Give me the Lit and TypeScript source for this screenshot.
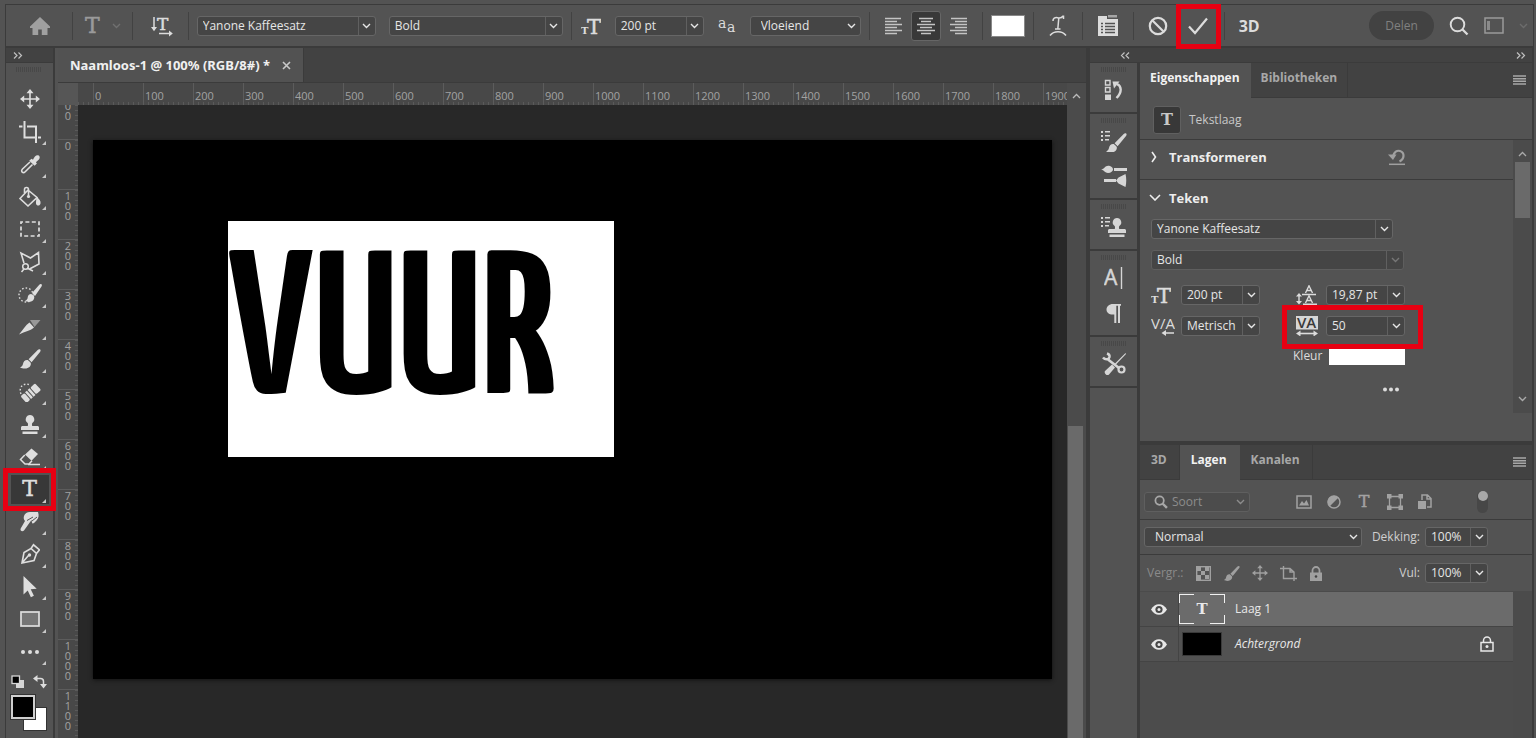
import { LitElement, html, svg, css, TemplateResult } from "lit";
import { customElement, property } from "lit/decorators.js";
import { classMap } from "lit/directives/class-map.js";

/* ---------- icons ---------- */

const box = (w: number, h: number, body: unknown) =>
  html`<svg width=${w} height=${h} viewBox="0 0 ${w} ${h}" fill="none" stroke="none" aria-hidden="true">${body}</svg>`;

const SERIF = "DejaVu Serif, serif";
const SANS = "Open Sans, sans-serif";

const stamp = svg`<path fill="currentColor" d="M11 1a4.3 4.3 0 0 1 2.6 7.7c-.7.6-.8 1.4-.4 3.3h5.3c.8 0 1.5.7 1.5 1.5V16H2v-2.5c0-.8.7-1.5 1.5-1.5h5.3c.4-1.9.3-2.7-.4-3.3A4.3 4.3 0 0 1 11 1zM3.500 17.500h15V20h-15z"/>`;
const brush = svg`<path fill="currentColor" d="M21.200.6c-.8-.6-1.700-.3-2.500.4L9.600 10.200l3 3L21 3c.7-.9.8-1.800.2-2.400zM8.800 11c-2.600-.4-4.300 1.200-4.700 3.600-.3 2-1.300 3.200-3 3.900 3 1.700 8.900 1.600 10.400-2 .6-1.400.5-2.700-.2-3.300z"/>`;
const list = svg`<g fill="currentColor"><path d="M0 1h2v2H0zM0 5h2v2H0zM0 9h2v2H0zM4 1h5v1.500H4zM4 5h5v1.500H4zM4 9h4v1.500H4z"/></g>`;
const moveShape = svg`<path stroke="currentColor" stroke-width="1.600" d="M10 3v14M3 10h14"/><path fill="currentColor" d="m10 0 3.500 4.200h-7zM10 20l-3.500-4.200h7zM0 10l4.200-3.500v7zM20 10l-4.200 3.500v-7z"/>`;

const icons: Record<string, TemplateResult> = {
  chevron: box(9, 6, svg`<path stroke="currentColor" stroke-width="1.400" d="M1 1l3.500 3.500L8 1"/>`),
  chevronBig: box(12, 7, svg`<path stroke="currentColor" stroke-width="1.600" d="M1 1l5 5 5-5"/>`),
  chevronRight: box(6, 12, svg`<path stroke="currentColor" stroke-width="1.600" d="M1 1l3.500 5L1 11"/>`),
  chevronUp: box(9, 6, svg`<path stroke="currentColor" stroke-width="1.300" d="M1 5l3.500-3.500L8 5"/>`),
  expand: box(10, 7, svg`<path stroke="currentColor" stroke-width="1.200" d="M1 .5l3 3-3 3M5.500 .5l3 3-3 3"/>`),
  collapse: box(10, 7, svg`<path stroke="currentColor" stroke-width="1.200" d="M4.500 .5l-3 3 3 3M9 .5l-3 3 3 3"/>`),
  home: box(22, 20, svg`<path fill="currentColor" d="M11 1 1 10.500V12h2.500v7h5.700v-5.500h3.600V19h5.700v-7H21v-1.500z"/>`),
  orient: box(24, 22, svg`<path stroke="currentColor" stroke-width="1.500" d="M3 2v12M8 18.500h11"/><path fill="currentColor" d="M0 12h6l-3 4.200zM18 15.500v6l3.800-3z"/><text x="6" y="14.500" font-family=${SERIF} font-size="17" fill="currentColor" stroke="currentColor" stroke-width=".5">T</text>`),
  size: box(20, 18, svg`<text x="0" y="17" font-family=${SERIF} font-size="10" font-weight="700" fill="currentColor">T</text><text x="6" y="17" font-family=${SERIF} font-size="21" fill="currentColor" stroke="currentColor" stroke-width=".5">T</text>`),
  alias: box(18, 18, svg`<text x="0" y="11" font-family=${SERIF} font-size="14" fill="currentColor">a</text><text x="9" y="15" font-family=${SERIF} font-size="14" fill="currentColor">a</text>`),
  left: box(18, 18, svg`<path stroke="currentColor" stroke-width="1.400" d="M0 1.500h16M0 4.500h12M0 7.500h17M0 10.500h12M0 13.500h17M0 16.500h12"/>`),
  center: box(18, 18, svg`<path stroke="currentColor" stroke-width="1.400" d="M2 1.500h14M4 4.500h10M0 7.500h18M3 10.500h12M0 13.500h18M4 16.500h10"/>`),
  right: box(18, 18, svg`<path stroke="currentColor" stroke-width="1.400" d="M2 1.500h16M6 4.500h12M1 7.500h17M6 10.500h12M1 13.500h17M6 16.500h12"/>`),
  warp: box(20, 22, svg`<g stroke="currentColor" stroke-width="1.500"><path d="M5 6C4.800 3.500 7 2.200 9.500 2.700s4 .6 5.500-1.700M10.800 3 9.800 14M7 14h5.500M15.500.5v3.500M2 20.500c4-5 12-5 16 0"/></g>`),
  panel: box(22, 22, svg`<path fill="currentColor" d="M1 1h9v3h11v17H1z"/><path fill="currentColor" opacity=".6" d="M11 0h9v2.500h-9z"/><path stroke="#535353" stroke-width="1.300" d="M4 8.500h2M8 8.500h10M4 11.500h2M8 11.500h10M4 14.500h2M8 14.500h10M4 17.500h2M8 17.500h10"/>`),
  cancel: box(20, 20, svg`<circle cx="10" cy="10" r="8.200" stroke="currentColor" stroke-width="2.200"/><path stroke="currentColor" stroke-width="2.200" d="M4.500 4.500l11 11"/>`),
  check: box(20, 18, svg`<path stroke="currentColor" stroke-width="2.200" d="M1 9.500l6 6.500L19 1.500"/>`),
  search: box(20, 20, svg`<circle cx="8.500" cy="8.500" r="6.800" stroke="currentColor" stroke-width="1.900"/><path stroke="currentColor" stroke-width="2.300" d="M13.500 13.500l5 5"/>`),
  workspace: box(20, 17, svg`<rect x="1" y="1" width="18" height="15" stroke="currentColor" stroke-width="1.500"/><path fill="currentColor" opacity=".8" d="M3 4h3v9H3z"/>`),
  menu: box(13, 10, svg`<path stroke="currentColor" stroke-width="1.600" d="M0 1h13M0 3.700h13M0 6.300h13M0 9h13"/>`),
  close: box(9, 9, svg`<path stroke="currentColor" stroke-width="1.600" d="M1 1l7 7M8 1L1 8"/>`),
  move: box(20, 20, moveShape),
  moveSmall: html`<svg width="16" height="16" viewBox="0 0 20 20" fill="none" aria-hidden="true">${moveShape}</svg>`,
  crop: box(22, 22, svg`<path stroke="currentColor" stroke-width="2" d="M5.500 0v16.500H17M8 5.500h9V22M0 5.500h3.500M19 16.500h3"/>`),
  dropper: box(20, 20, svg`<path fill="currentColor" d="M11.500 4.700l1.500 1C14.200 3 16 .8 18 1.200c2.200.5 2 3 .9 4.200l-3 2.800 1 1.200-2.300 2.300L9.200 6.800z"/><path stroke="currentColor" stroke-width="1.600" d="M10 8 2.500 15c-1.200 1.300-1 2.500-.3 3.100.8.700 2 .6 3-.4L12.500 10.500"/>`),
  bucket: box(22, 22, svg`<path stroke="currentColor" stroke-width="1.600" d="M9 4 1 12.500 9 20l9-8.500zM9.500 11V3.500C9.500 1 5.500.5 5.500 3.500V7"/><circle cx="9.500" cy="10.500" r="1.600" fill="currentColor"/><path fill="currentColor" d="M17 10.500c3.500 2 5 5 4.500 7-.4 2.600-4 2.800-4.500 0-.3-2 .8-4 0-7z"/>`),
  marquee: box(20, 16, svg`<rect x="1" y="1" width="18" height="14" stroke="currentColor" stroke-width="1.700" stroke-dasharray="4 2.400" stroke-dashoffset="2"/>`),
  lasso: box(22, 22, svg`<path stroke="currentColor" stroke-width="1.600" d="M5 12 2 2l9.500 5L19.500 1.500 20 13l-9.500 5"/><circle cx="6.500" cy="15.500" r="2.800" stroke="currentColor" stroke-width="1.500"/><path stroke="currentColor" stroke-width="1.500" d="M5 18l-2.500 3M8 17l6 3"/>`),
  quick: box(24, 20, svg`<circle cx="8" cy="11" r="7" stroke="currentColor" stroke-width="1.400" stroke-dasharray="1.600 2"/><path fill="currentColor" d="M23.500.3c-.8-.5-1.500-.2-2.200.4L14 9l3 3 6.500-9.500c.5-.8.600-1.700 0-2.200zM13.300 10c-2.400 0-3.300 1.400-3.600 3.600-.2 1.800-1 2.700-2.700 3.400 3 1.500 7.500 1 8.800-1.800.6-1.200.6-2.300.2-3z"/>`),
  knife: box(22, 16, svg`<path fill="currentColor" opacity=".5" d="M11 1h10.500l-6 7z"/><path fill="currentColor" d="M10.500 3.500 15 8.500c-3 3-9 4-15 7C4 11 6.500 6 10.500 3.500z"/>`),
  brush: box(22, 20, brush),
  brushSmall: html`<svg width="17" height="17" viewBox="0 0 22 20" fill="none" aria-hidden="true">${brush}</svg>`,
  heal: box(22, 20, svg`<path stroke="currentColor" stroke-width="1.400" stroke-dasharray="1.600 2" d="M2 12C-1 5 5 0 11 3"/><g transform="rotate(-42 12 11)"><rect x="2" y="6.500" width="5" height="9" rx="1.500" fill="currentColor"/><rect x="8" y="6.500" width="2.500" height="9" fill="currentColor"/><rect x="11.500" y="6.500" width="2.500" height="9" fill="currentColor"/><rect x="15" y="6.500" width="6.500" height="9" rx="1.500" fill="currentColor"/></g>`),
  stamp: box(22, 21, stamp),
  eraser: box(22, 18, svg`<path fill="currentColor" d="M12.500.5 19 6l-6.500 6.800L6 6.500z"/><path stroke="currentColor" stroke-width="1.500" d="M5.800 7 1.500 11.500 6 16h4l3-3.200M9 16.500h12"/>`),
  smudge: box(22, 22, svg`<path fill="currentColor" d="M5 5c1-3 4-4.500 7-4h7c1 3 1 6-1.500 8.500L15 12c-1 .8-2 .5-2-.5L12.500 9 5 19.500c-1.500 1.600-4.300.5-3.300-2L6 10c-1.500-1.500-1.500-3.500-1-5z"/><path stroke="#535353" d="M8 9.500 14 6M13 10l5-4"/>`),
  pen: box(20, 22, svg`<path stroke="currentColor" stroke-width="1.600" d="M2 20 4 9.500l7-4 5.500 5-2.500 7zM2 20l6.500-7.500M11 5.500l2.500-3.700 6 5-3 3.700"/><circle cx="9.500" cy="12" r="1.700" fill="currentColor"/>`),
  arrow: box(16, 22, svg`<path fill="currentColor" d="M1.500 0v18.500l4.200-4 3.200 6.700 3-1.500-3.200-6.500 6-.5z"/>`),
  rect: box(20, 16, svg`<rect x="1" y="1" width="18" height="14" fill="#757575" stroke="currentColor" stroke-width="1.700"/>`),
  dots: box(20, 6, svg`<g fill="currentColor"><circle cx="3" cy="3" r="2"/><circle cx="10" cy="3" r="2"/><circle cx="17" cy="3" r="2"/></g>`),
  dotsSmall: box(18, 5, svg`<g fill="currentColor"><circle cx="3" cy="2.500" r="2"/><circle cx="9" cy="2.500" r="2"/><circle cx="15" cy="2.500" r="2"/></g>`),
  mini: box(14, 14, svg`<path fill="#d6d6d6" d="M5 5h8v8H5z"/><rect x="1" y="1" width="7.500" height="7.500" fill="#000" stroke="#d6d6d6" stroke-width="1.300"/>`),
  swap: box(14, 14, svg`<path stroke="currentColor" stroke-width="1.500" d="M3 3.500h4.500c2 0 3 1 3 3V10"/><path fill="currentColor" d="M4.500 0v7L0 3.500zM7 9h7l-3.500 4.500z"/>`),
  history: box(20, 22, svg`<g stroke="currentColor" stroke-width="1.400"><path d="M1.500 1.500h4.500v4.500H1.500zM1.500 8.500h4.500v4.500H1.500z"/></g><path fill="currentColor" d="M1 15.500h6V21H1z"/><path stroke="currentColor" stroke-width="2.400" d="M13 5c4.500 2 5.500 8-.5 14"/><path fill="currentColor" d="M8.500 2.500h7L10 9.500z"/>`),
  brushes: box(26, 22, svg`${list}<g transform="translate(4 3)">${brush}</g>`),
  brushSet: box(26, 22, svg`<path fill="currentColor" d="M0 4.500C4 4 4-.5 9 1c2 .8 3 2 3 3.500S10 8 7 8 3 5 0 4.500zM13 3h13v3H13zM3 14h12v3H3zM15 15.500l2.500-3 7-3.500c1 4 1 9 0 13l-7-3.500z"/>`),
  stampSet: box(26, 22, svg`${list}<g transform="translate(5 1)">${stamp}</g>`),
  char: box(20, 22, svg`<text x="0" y="18" font-family=${SANS} font-size="21" fill="currentColor" stroke="currentColor" stroke-width=".5">A</text><path stroke="currentColor" stroke-width="1.400" d="M17.500 0v22"/>`),
  para: box(16, 20, svg`<path fill="currentColor" d="M7 1h8v1.700h-1V20h-2V2.700h-1.700V20h-2v-8.500C3 12 .5 9.500.5 6.500S3 1 7 1z"/>`),
  tools: box(26, 24, svg`<path stroke="currentColor" stroke-width="2.600" d="M7 7.500l11 8.500"/><circle cx="20.500" cy="17.500" r="3" stroke="currentColor" stroke-width="2.200"/><path stroke="currentColor" stroke-width="2.500" d="M2 5.500c2.500 3 6 2 6.500-.5.300-2-1-3-2.500-3.500"/><path fill="currentColor" d="M24.500 1 13.500 12l1 1L25 2zM11 12.500l3 3-6 7c-1.700 1.800-5.500-1-4-3.500z"/>`),
  reset: box(18, 18, svg`<path stroke="currentColor" stroke-width="2.200" d="M5 8.500C6 4 9 2 12 3c5 1.600 4.500 8-.5 10.500"/><path fill="currentColor" d="M0 6.500h8.500L5 12z"/><path stroke="currentColor" stroke-width="1.500" d="M1 16.300h16"/>`),
  leading: box(22, 20, svg`<path stroke="currentColor" stroke-width="1.400" d="M3 10v8M6 9.500h14M7 19.300h14"/><path fill="currentColor" d="M0 11.500h6L3 8zM0 16h6l-3 3.500z"/><path stroke="currentColor" stroke-width="1.400" d="M9.500 8 13 .8 16.500 8M11 5.500h4M9.500 18l3.500-7.200 3.500 7.200M11 15.500h4"/>`),
  kerning: box(24, 20, svg`<text x="0" y="13" font-family=${SANS} font-size="15" fill="currentColor">V/A</text><path stroke="currentColor" stroke-width="1.500" d="M13 17h10"/><path fill="currentColor" d="M15 14v6l-4.500-3z"/>`),
  tracking: box(22, 20, svg`<path fill="#d6d6d6" d="M0 0h22v13.500H0z"/><text x="1" y="12" font-family=${SANS} font-size="15" font-weight="600" fill="#3a3a3a">VA</text><path stroke="currentColor" stroke-width="1.600" d="M3 17.500h16"/><path fill="currentColor" d="M4.500 14.500v6L0 17.500zM17.500 14.500v6l4.500-3z"/>`),
  image: box(16, 14, svg`<rect x="1" y="1" width="14" height="12" stroke="currentColor" stroke-width="1.500"/><path fill="currentColor" d="M3 10.500 6 6l2 2.500L10.500 5l2.500 5.500z"/>`),
  adjust: box(14, 14, svg`<circle cx="7" cy="7" r="6" stroke="currentColor" stroke-width="1.500"/><path fill="currentColor" d="M11.500 2.500A6.300 6.300 0 0 0 2.500 11.500z"/>`),
  shape: box(16, 16, svg`<path stroke="currentColor" stroke-width="1.300" d="M2.500 2.500h11v11h-11z"/><g fill="currentColor"><path d="M0 0h4.500v4.500H0zM11.500 0H16v4.500h-4.500zM0 11.500h4.500V16H0zM11.500 11.500H16V16h-4.500z"/></g>`),
  smart: box(14, 16, svg`<path stroke="currentColor" stroke-width="1.500" d="M4 6V1h5.500L13 4.500V13H9M9 1v4h4"/><path fill="currentColor" d="M0 7h8v8H0z"/>`),
  checker: box(15, 15, svg`<rect x=".7" y=".7" width="13.600" height="13.600" stroke="currentColor" stroke-width="1.400"/><path fill="currentColor" d="M1 1h4v4H1zM9 1h4v4H9zM5 5h4v4H5zM1 9h4v5H1zM9 9h4v4H9z"/>`),
  frame: box(17, 15, svg`<path stroke="currentColor" stroke-width="1.400" d="M3.500 0v12.500H17M0 2.500h10l4 3.500v9M10 2.500V6h4"/>`),
  lock: box(14, 15, svg`<path fill="currentColor" d="M1 6.500h12V15H1z"/><path stroke="currentColor" stroke-width="1.800" d="M3.500 7V4.500a3.500 3.500 0 0 1 7 0V7"/><circle cx="7" cy="10.500" r="1.300" fill="#444"/>`),
  lockOpen: box(14, 16, svg`<rect x="1" y="6.500" width="12" height="8.500" stroke="currentColor" stroke-width="1.500"/><path stroke="currentColor" stroke-width="1.500" d="M3.500 6.500V4.500a3.500 3.500 0 0 1 7 0v2"/><circle cx="7" cy="10.500" r="1.500" fill="currentColor"/>`),
  eye: box(16, 11, svg`<path fill="currentColor" d="M0 5.500C4-1.500 12-1.500 16 5.500 12 12.500 4 12.500 0 5.500z"/><circle cx="8" cy="5.500" r="3.600" fill="#484848"/><circle cx="8" cy="5.500" r="1.500" fill="currentColor"/>`),
};

/* ---------- drop-down ---------- */

@customElement("ps-combo")
export class PsCombo extends LitElement {
  @property() label = "";
  @property() value = "";
  @property({ type: Boolean }) plain = false;
  @property({ type: Boolean }) dim = false;

  static styles = css`
    :host { display: block; }
    .combo {
      display: grid;
      grid-template-columns: minmax(0, 1fr) 17px;
      height: 20px;
      box-sizing: border-box;
      border: 1px solid #666;
      border-radius: 3px;
      background: #454545;
      color: #e6e6e6;
    }
    .dim { border-color: #5e5e5e; }
    select {
      grid-area: 1 / 1 / 2 / 3;
      appearance: none;
      min-width: 0;
      margin: 0;
      padding: 0 18px 0 5px;
      border: 0;
      outline: 0;
      background: none;
      color: inherit;
      font: 12px/18px "Open Sans", sans-serif;
    }
    .plain select { padding-left: 10px; }
    .arrow {
      grid-area: 1 / 2 / 2 / 3;
      display: grid;
      place-items: center;
      border-left: 1px solid #606060;
      pointer-events: none;
    }
    .plain .arrow { border-left-color: transparent; }
    .dim .arrow { color: #777; }
  `;

  render() {
    return html`<div class=${classMap({ combo: true, plain: this.plain, dim: this.dim })}>
      <select aria-label=${this.label}><option>${this.value}</option></select>
      <span class="arrow">${icons.chevron}</span>
    </div>`;
  }
}

/* ---------- application ---------- */

const TOOLS: [string, string][] = [
  ["move", "Verplaatsen"], ["crop", "Uitsnijden"], ["dropper", "Pipet"], ["bucket", "Emmertje"],
  ["marquee", "Selectiekader"], ["lasso", "Veelhoeklasso"], ["quick", "Snelle selectie"], ["knife", "Segment"],
  ["brush", "Penseel"], ["heal", "Retoucheren"], ["stamp", "Kloonstempel"], ["eraser", "Gummetje"],
  ["type", "Tekst"], ["smudge", "Natte vinger"], ["pen", "Pen"], ["arrow", "Padselectie"],
  ["rect", "Rechthoek"], ["dots", "Meer"],
];

const DOCK: [string, string][][] = [
  [["history", "Historie"]],
  [["brushes", "Penselen"], ["brushSet", "Penseelinstellingen"]],
  [["stampSet", "Kloonbron"]],
  [["char", "Teken"], ["para", "Alinea"]],
  [["tools", "Voorinstellingen"]],
];

@customElement("app-root")
export class AppRoot extends LitElement {
  static styles = css`
    :host {
      display: block;
      font: 12px/18px "Open Sans", sans-serif;
      color: #dcdcdc;
      --line: #3b3b3b;
      --bar: #535353;
      --deep: #424242;
    }
    * { box-sizing: border-box; }
    svg { display: block; flex: none; }
    button {
      display: grid;
      place-items: center;
      margin: 0;
      padding: 0;
      border: 0;
      background: none;
      color: inherit;
      font: inherit;
    }
    .app {
      display: flex;
      flex-direction: column;
      height: 100vh;
      min-height: 738px;
      padding: 4px 2px 0 5px;
      background: var(--bar);
      overflow: hidden;
    }
    .serif { font: 22px/22px "DejaVu Serif", serif; -webkit-text-stroke: 0.5px currentColor; }

    /* options bar */
    .options {
      display: flex;
      align-items: center;
      flex: none;
      height: 44px;
      border: 1px solid var(--line);
      border-bottom-width: 2px;
    }
    .group {
      display: flex;
      align-items: center;
      height: 28px;
      flex: none;
      border-right: 1px solid #424242;
    }
    .last { border-right: 0; }
    .g8 { padding: 0 8px; gap: 13px; }
    .size { padding: 0 8px 0 9px; gap: 14px; }
    .g14 { padding: 0 14px; }
    .home { padding: 0 21px 0 23px; color: #a0a0a0; }
    .preset { padding: 0 11px 0 12px; gap: 12px; color: #9a9a9a; }
    .preset .chev { color: #707070; }
    .orient { padding: 0 13px 0 18px; }
    .w179 { width: 179px; }
    .w174 { width: 174px; }
    .w89 { width: 89px; }
    .w111 { width: 111px; }
    .align { padding: 0 9px; gap: 2px; }
    .align button { width: 30px; height: 30px; color: #c4c4c4; }
    .align .on { background: #383838; border-radius: 3px; border: 1px solid #666; }
    .swatch { width: 34px; height: 22px; background: #fff; border: 1px solid #888; }
    .commit { padding: 0 3px 0 14px; gap: 8px; }
    .accept { width: 45px; height: 28px; }
    .mark { position: relative; }
    .mark::after {
      content: "";
      position: absolute;
      inset: var(--mark, 0);
      border: 5px solid #e60012;
      pointer-events: none;
    }
    .accept.mark { --mark: -8px 0 -9px 0; }
    .three { padding: 0 14px; font: 700 16px/20px "Open Sans", sans-serif; }
    .end {
      display: flex;
      align-items: center;
      gap: 15px;
      margin-left: auto;
      padding-right: 5px;
    }
    .share {
      width: 65px;
      height: 29px;
      border-radius: 15px;
      background: #424242;
      color: #808080;
    }
    .end .dimmed { color: #9a9a9a; }
    .end .faint { color: #6c6c6c; }

    /* body columns */
    .body { display: flex; flex: 1; min-height: 0; }
    .toolbar {
      display: flex;
      flex-direction: column;
      width: 50px;
      flex: none;
      border: solid var(--line);
      border-width: 0 2px 0 1px;
    }
    .strip {
      display: flex;
      align-items: center;
      height: 15px;
      flex: none;
      padding: 0 7px;
      background: var(--deep);
      border-bottom: 1px solid var(--line);
      color: #c0c0c0;
    }
    .grip {
      width: 26px;
      height: 5px;
      flex: none;
      background: repeating-linear-gradient(90deg, #484848 0 1px, transparent 1px 2px);
    }
    .toolbar .grip { margin: 4px 0 0 10px; }
    .tools {
      display: flex;
      flex-direction: column;
      height: 585px;
      flex: none;
      margin-top: 11px;
      color: #dedede;
    }
    .tool { flex: 1; position: relative; width: 100%; }
    .more::before {
      content: "";
      position: absolute;
      right: 7px;
      bottom: 3px;
      border: solid transparent;
      border-width: 0 0 4px 4px;
      border-bottom-color: #c8c8c8;
    }
    .picked { background: linear-gradient(#383838, #383838) center / 38px 29px no-repeat; }
    .tool.mark { --mark: -5px -3px -5px -3px; z-index: 1; }
    .colors { display: flex; gap: 8px; padding: 7px 0 0 5px; }
    .chips { display: grid; width: 36px; height: 36px; margin: 6px 0 0 5px; }
    .chip { grid-area: 1 / 1; width: 24px; height: 24px; border: 2px solid #cfcfcf; background: #000; outline: 1px solid #333; outline-offset: -1px; }
    .chip.front { outline-offset: 0; }
    .chip.back { place-self: end; background: #fff; border-color: #fff; }

    .doc {
      display: flex;
      flex-direction: column;
      flex: 1;
      min-width: 0;
      margin-left: 3px;
      border-right: 1px solid var(--line);
    }
    .tabbar { display: flex; flex: none; height: 35px; background: var(--deep); border-bottom: 1px solid var(--line); }
    .doctab {
      display: flex;
      align-items: center;
      gap: 12px;
      padding: 0 12px;
      background: #525252;
      border-right: 1px solid var(--line);
      color: #f0f0f0;
      font: 700 13px/18px "Noto Sans", sans-serif;
      white-space: nowrap;
    }
    .doctab button { color: #c8c8c8; }
    .work { display: flex; flex: 1; min-height: 0; }
    .surface {
      display: grid;
      grid-template: 22px minmax(0, 1fr) / 20px minmax(0, 1fr);
      flex: 1;
      min-width: 0;
    }
    .corner { background: #565656; }
    .hruler, .vruler { display: flex; overflow: hidden; background-color: #484848; color: #a2a2a2; font-size: 11px; }
    .hruler {
      padding-left: 15px;
      background-image: repeating-linear-gradient(90deg, #5a5a5a 0 1px, transparent 1px 5px);
      background-position: 0 100%;
      background-size: 100% 3px;
      background-repeat: no-repeat;
      line-height: 25px;
    }
    .hruler span { width: 50px; flex: none; padding-left: 1px; border-left: 1px solid #5c5c5c; }
    .vruler {
      flex-direction: column;
      background-image: repeating-linear-gradient(#5a5a5a 0 1px, transparent 1px 5px);
      background-position: 100% 0;
      background-size: 3px 100%;
      background-repeat: no-repeat;
      line-height: 10px;
    }
    .vruler div { height: 50px; flex: none; padding-top: 1px; border-top: 1px solid #5c5c5c; }
    .vruler .cut { display: flex; flex-direction: column; justify-content: flex-end; height: 34px; padding: 0 0 18px; border: 0; }
    .vruler span { display: block; text-align: center; flex: none; }
    .pasteboard { background: #282828; padding: 35px 15px 0 15px; }
    .artboard { display: flow-root; aspect-ratio: 16 / 9; background: #000; box-shadow: 0 1px 4px #111; }
    .typed {
      display: flex;
      align-items: center;
      width: 386px;
      height: 236px;
      margin: 81px 0 0 135px;
      background: #fff;
      color: #000;
      font: 700 204px/236px "Yanone Kaffeesatz", "Open Sans Condensed", "Noto Sans ExtraCondensed", "Noto Sans Condensed", "Roboto Condensed", "Liberation Sans Narrow", "DejaVu Sans Condensed", sans-serif;
      white-space: nowrap;
    }
    .scroll {
      display: flex;
      flex-direction: column;
      justify-content: space-between;
      align-items: center;
      width: 19px;
      flex: none;
      padding: 10px 2px 0 1px;
      background: #4b4b4b;
      color: #bbb;
    }
    .thumb { width: 15px; height: 312px; background: #6a6a6a; margin-right: 1px; }

    /* right side */
    .side {
      display: flex;
      flex-direction: column;
      width: 447px;
      flex: none;
      border: solid var(--line);
      border-width: 0 2px 0 3px;
    }
    .side .strip { justify-content: space-between; padding: 0 6px 0 30px; }
    .cols { display: flex; flex: 1; min-height: 0; }
    .dock { width: 50px; flex: none; border-right: 3px solid var(--line); }
    .stack {
      display: flex;
      flex-direction: column;
      align-items: center;
      padding: 4px 0 5px;
      border-bottom: 2px solid var(--line);
      color: #d6d6d6;
    }
    .stack button { width: 36px; height: 35px; }
    .panels { display: flex; flex-direction: column; flex: 1; min-width: 0; }
    .tabs {
      display: flex;
      flex: none;
      height: 35px;
      background: var(--deep);
      font-weight: 700;
      color: #a8a8a8;
    }
    .tabs button { padding: 0 10px 4px; border: solid var(--line); border-width: 0 1px 1px 0; }
    .tabs.wide button { padding: 0 12px 4px 11px; }
    .tabs .open { background: var(--bar); color: #f2f2f2; border-color: transparent; }
    .tabs button.menu { margin-left: auto; padding: 0 6px 0 0; border-right: 0; }
    .tabs i { flex: 1; border-bottom: 1px solid var(--line); }
    .props { height: 347px; flex: none; border-bottom: 4px solid var(--line); }
    .kind {
      display: flex;
      align-items: center;
      gap: 8px;
      height: 42px;
      padding: 3px 0 0 13px;
      border-bottom: 1px solid var(--line);
      color: #c8c8c8;
    }
    .kind b { display: grid; place-items: center; width: 28px; height: 28px; border-radius: 3px; border: 1px solid #606060; background: #383838; font: 700 16px/16px "DejaVu Serif", serif; }
    .props .inner { display: flex; height: 273px; }
    .form { flex: 1; min-width: 0; }
    .rail {
      display: flex;
      flex-direction: column;
      align-items: center;
      width: 19px;
      flex: none;
      background: #4b4b4b;
      color: #aaa;
      padding: 11px 0 11px 0;
    }
    .rail i { width: 15px; height: 56px; background: #6a6a6a; margin: 5px 0 auto; }
    .head { display: flex; align-items: center; gap: 11px; height: 40px; padding: 0 0 5px 9px; font-size: 13px; font-weight: 700; color: #ededed; }
    .head.second { height: 39px; padding-bottom: 4px; }
    .head .ico { display: grid; place-items: center; width: 9px; }
    .head button { margin: 0 107px 0 auto; color: #a0a0a0; }
    .ruled { border-bottom: 1px solid var(--line); }
    .fields { display: flex; flex-direction: column; gap: 11px; padding: 0 0 0 11px; }
    .w242 { width: 242px; }
    .w253 { width: 253px; }
    .w253 + .pair { margin-top: 4px; }
    .pair { display: flex; }
    .field { display: flex; align-items: center; gap: 8px; height: 20px; }
    .field .ico { width: 22px; }
    .field ps-combo { width: 79px; }
    .field + .field { margin-left: 36px; }
    .field.mark { --mark: -11px -18px -13px -14px; }
    .color { display: flex; align-items: center; gap: 7px; margin-left: 142px; height: 18px; }
    .color button { width: 76px; height: 18px; background: #fff; }
    .dots { margin: 22px 0 0 242px; width: 18px; }

    /* layers */
    .row { display: flex; align-items: center; flex: none; border-bottom: 1px solid var(--line); padding-left: 4px; }
    .filter { height: 40px; color: #a2a2a2; padding-top: 4px; }
    .kindbox {
      display: grid;
      grid-template-columns: 27px 1fr 18px;
      align-items: center;
      justify-items: center;
      width: 106px;
      height: 20px;
      border: 1px solid #5f5f5f;
      border-radius: 3px;
      background: #4c4c4c;
      color: #8c8c8c;
    }
    .kindbox span { pointer-events: none; }
    .kindbox .loupe { grid-area: 1 / 1; color: #a8a8a8; padding-left: 5px; }
    .kindbox .down { grid-area: 1 / 3; }
    .kindbox select {
      grid-area: 1 / 1 / 2 / 4;
      width: 100%;
      appearance: none;
      margin: 0;
      padding: 0 18px 0 27px;
      border: 0;
      background: none;
      color: inherit;
      font: 12px/18px "Open Sans", sans-serif;
    }
    .filters { display: flex; align-items: center; gap: 15px; margin-left: 46px; }
    .filters .serif { font: 16px/16px "DejaVu Serif", serif; width: 16px; }
    .toggle { width: 11px; height: 22px; margin-left: 45px; border-radius: 6px; background: #474747; padding: 0; place-items: start center; }
    .toggle i { width: 10px; height: 10px; border-radius: 5px; background: #a8a8a8; }
    .blend { height: 35px; }
    .w218 { width: 218px; }
    .amount { display: flex; align-items: center; justify-content: flex-end; gap: 5px; width: 126px; color: #cfcfcf; }
    .amount ps-combo { width: 63px; }
    .locks { height: 37px; padding-left: 7px; color: #8a8a8a; border-bottom-color: #4b4b4b; }
    .lockset { display: flex; align-items: center; gap: 12px; width: 215px; color: #a0a0a0; }
    .lockset span { color: #8a8a8a; }
    .layers { flex: 1; display: flex; background: #4c4c4c; }
    .list { flex: 1; }
    .layer { display: flex; height: 35px; border-bottom: 1px solid #444; background: #525252; color: #e8e8e8; }
    .vis { width: 39px; border-right: 1px solid #444; }
    .name { display: flex; align-items: center; flex: 1; gap: 10px; padding: 0 19px 0 0; }
    .chosen .name { background: #6b6b6b; }
    .thumbnail { width: 46px; height: 30px; display: grid; place-items: center; }
    .tframe { font: 700 15px/15px "DejaVu Serif", serif;
      background:
        linear-gradient(90deg, #f0f0f0 15px, transparent 15px 31px, #f0f0f0 31px) 0 0 / 100% 1px no-repeat,
        linear-gradient(90deg, #f0f0f0 15px, transparent 15px 31px, #f0f0f0 31px) 0 100% / 100% 1px no-repeat,
        linear-gradient(#f0f0f0 9px, transparent 9px 21px, #f0f0f0 21px) 0 0 / 1px 100% no-repeat,
        linear-gradient(#f0f0f0 9px, transparent 9px 21px, #f0f0f0 21px) 100% 0 / 1px 100% no-repeat;
    }
    .black i { width: 40px; height: 24px; background: #000; border: 1px solid #3a3a3a; }
    .name .locked { margin-left: auto; }
    .gutter { width: 19px; flex: none; background: #4b4b4b; }
    em { font-style: italic; }
  `;

  private btn(icon: string, label: string, cls = "") {
    return html`<button class=${cls} aria-label=${label}>${icons[icon]}</button>`;
  }

  private optionsBar() {
    return html`<header class="options">
      <div class="group home">${this.btn("home", "Start")}</div>
      <div class="group preset"><span class="serif">T</span><span class="chev">${icons.chevron}</span></div>
      <div class="group orient">${this.btn("orient", "Tekstrichting")}</div>
      <div class="group g8">
        <ps-combo class="w179" label="Lettertype" value="Yanone Kaffeesatz"></ps-combo>
        <ps-combo class="w174" label="Stijl" value="Bold"></ps-combo>
      </div>
      <div class="group size">
        ${icons.size}
        <ps-combo class="w89" label="Grootte" value="200 pt"></ps-combo>
        ${icons.alias}
        <ps-combo class="w111" plain label="Anti-alias" value="Vloeiend"></ps-combo>
      </div>
      <div class="group align">
        ${this.btn("left", "Links uitlijnen")}${this.btn("center", "Centreren", "on")}${this.btn("right", "Rechts uitlijnen")}
      </div>
      <div class="group g8"><button class="swatch" aria-label="Tekstkleur"></button></div>
      <div class="group g14">${this.btn("warp", "Verdraaien")}</div>
      <div class="group g14">${this.btn("panel", "Deelvensters")}</div>
      <div class="group commit">${this.btn("cancel", "Annuleren")}${this.btn("check", "Vastleggen", "accept mark")}</div>
      <div class="group last"><button class="three">3D</button></div>
      <div class="end">
        <button class="share">Delen</button>
        ${this.btn("search", "Zoeken")}
        ${this.btn("workspace", "Werkruimte", "dimmed")}
        <span class="faint">${icons.chevron}</span>
      </div>
    </header>`;
  }

  private toolbar() {
    return html`<nav class="toolbar">
      <div class="strip">${icons.expand}</div>
      <div class="grip"></div>
      <div class="tools">
        ${TOOLS.map(([id, label], i) => {
          const on = id === "type";
          return html`<button aria-label=${label} class=${classMap({ tool: true, more: i > 0, picked: on, mark: on })}>
            ${on ? html`<span class="serif">T</span>` : icons[id]}
          </button>`;
        })}
      </div>
      <div class="colors">${icons.mini}${icons.swap}</div>
      <div class="chips"><span class="chip back"></span><span class="chip front"></span></div>
    </nav>`;
  }

  private document() {
    const across = Array.from({ length: 20 }, (_, i) => i * 100);
    const down = Array.from({ length: 12 }, (_, i) => i * 100);
    const digits = (n: number) => [...String(n)].map((d) => html`<span>${d}</span>`);
    return html`<main class="doc">
      <div class="tabbar">
        <div class="doctab">Naamloos-1 @ 100% (RGB/8#) *${this.btn("close", "Sluiten")}</div>
      </div>
      <div class="work">
        <div class="surface">
          <div class="corner"></div>
          <div class="hruler">${across.map((n) => html`<span>${n}</span>`)}</div>
          <div class="vruler"><div class="cut">${digits(100)}</div>${down.map((n) => html`<div>${digits(n)}</div>`)}</div>
          <div class="pasteboard"><div class="artboard"><div class="typed">VUUR</div></div></div>
        </div>
        <div class="scroll">${icons.chevronUp}<div class="thumb"></div></div>
      </div>
    </main>`;
  }

  private properties() {
    return html`<div class="tabs">
        <button class="open">Eigenschappen</button><button>Bibliotheken</button><i></i>
        ${this.btn("menu", "Menu", "menu")}
      </div>
      <section class="props">
        <div class="kind"><b>T</b>Tekstlaag</div>
        <div class="inner">
          <div class="form">
            <div class="head ruled"><span class="ico">${icons.chevronRight}</span>Transformeren${this.btn("reset", "Herstellen")}</div>
            <div class="head second"><span class="ico">${icons.chevronBig}</span>Teken</div>
            <div class="fields">
              <ps-combo class="w242" label="Lettertype" value="Yanone Kaffeesatz"></ps-combo>
              <ps-combo class="w253" dim label="Stijl" value="Bold"></ps-combo>
              <div class="pair">
                <div class="field"><span class="ico">${icons.size}</span><ps-combo label="Grootte" value="200 pt"></ps-combo></div>
                <div class="field"><span class="ico">${icons.leading}</span><ps-combo label="Regelafstand" value="19,87 pt"></ps-combo></div>
              </div>
              <div class="pair">
                <div class="field"><span class="ico">${icons.kerning}</span><ps-combo label="Spatiëring" value="Metrisch"></ps-combo></div>
                <div class="field mark"><span class="ico">${icons.tracking}</span><ps-combo label="Tekstspatiëring" value="50"></ps-combo></div>
              </div>
              <div class="color">Kleur<button aria-label="Kleur"></button></div>
            </div>
            ${this.btn("dotsSmall", "Meer", "dots")}
          </div>
          <div class="rail">${icons.chevronUp}<i></i>${icons.chevron}</div>
        </div>
      </section>`;
  }

  private layers() {
    return html`<div class="tabs wide">
        <button>3D</button><button class="open">Lagen</button><button>Kanalen</button><i></i>
        ${this.btn("menu", "Menu", "menu")}
      </div>
      <div class="row filter">
        <div class="kindbox">
          <select aria-label="Filter"><option>Soort</option></select>
          <span class="loupe"><svg width="14" height="14" viewBox="0 0 20 20" fill="none" aria-hidden="true"><circle cx="8" cy="8" r="6" stroke="currentColor" stroke-width="2.500" /><path stroke="currentColor" stroke-width="3.500" d="M12.500 12.500l6 6" /></svg></span>
          <span class="down">${icons.chevron}</span>
        </div>
        <div class="filters">
          ${this.btn("image", "Pixellagen")}${this.btn("adjust", "Aanpassingslagen")}
          <button class="serif">T</button>
          ${this.btn("shape", "Vormlagen")}${this.btn("smart", "Slimme objecten")}
        </div>
        <button class="toggle" aria-label="Filter aan of uit"><i></i></button>
      </div>
      <div class="row blend">
        <ps-combo class="w218" plain label="Overvloeimodus" value="Normaal"></ps-combo>
        <div class="amount">Dekking:<ps-combo label="Dekking" value="100%"></ps-combo></div>
      </div>
      <div class="row locks">
        <div class="lockset">
          <span>Vergr.:</span>${this.btn("checker", "Transparantie")}${this.btn("brushSmall", "Pixels")}${this.btn("moveSmall", "Positie")}${this.btn("frame", "Tekengebied")}${this.btn("lock", "Alles")}
        </div>
        <div class="amount">Vul:<ps-combo label="Vulling" value="100%"></ps-combo></div>
      </div>
      <section class="layers">
        <div class="list">
          <div class="layer chosen">
            ${this.btn("eye", "Zichtbaar", "vis")}
            <div class="name"><span class="thumbnail tframe">T</span>Laag 1</div>
          </div>
          <div class="layer">
            ${this.btn("eye", "Zichtbaar", "vis")}
            <div class="name"><span class="thumbnail black"><i></i></span><em>Achtergrond</em><span class="locked">${icons.lockOpen}</span></div>
          </div>
        </div>
        <div class="gutter"></div>
      </section>`;
  }

  render() {
    return html`<div class="app">
      ${this.optionsBar()}
      <div class="body">
        ${this.toolbar()}
        ${this.document()}
        <aside class="side">
          <div class="strip">${icons.collapse}${icons.expand}</div>
          <div class="cols">
            <div class="dock">
              ${DOCK.map((group) => html`<div class="stack"><div class="grip"></div>${group.map(([id, label]) => this.btn(id, label))}</div>`)}
            </div>
            <div class="panels">${this.properties()}${this.layers()}</div>
          </div>
        </aside>
      </div>
    </div>`;
  }
}
